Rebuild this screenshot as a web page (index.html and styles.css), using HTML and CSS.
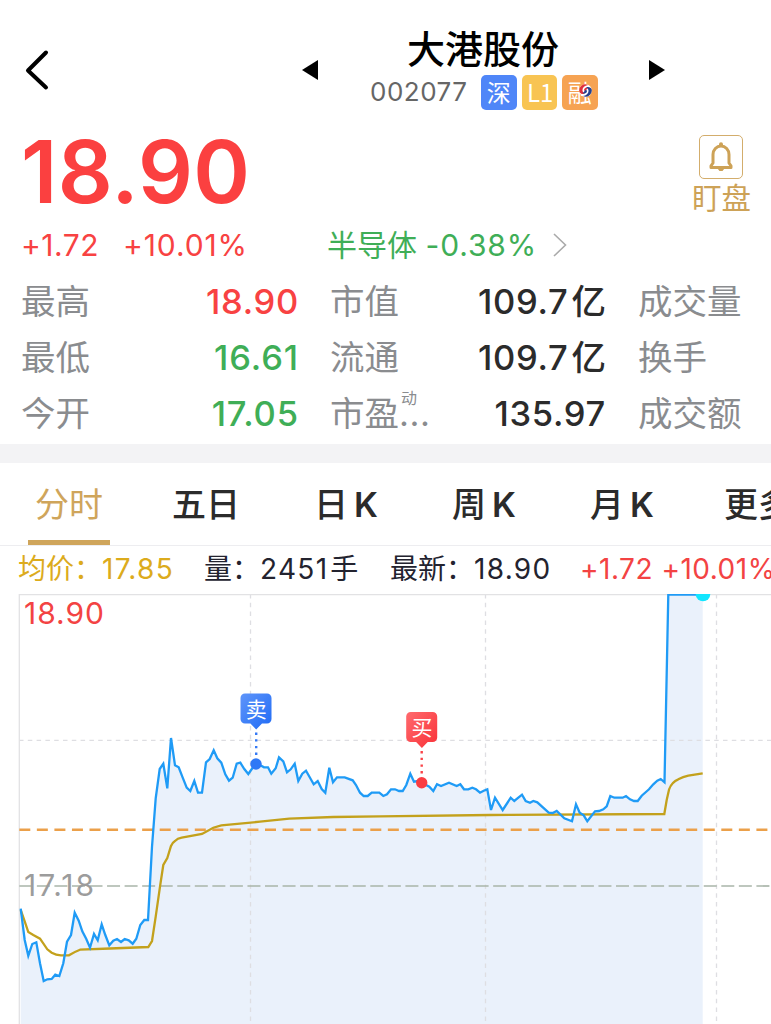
FILE: index.html
```html
<!DOCTYPE html>
<html lang="zh-CN">
<head>
  <meta charset="UTF-8" />
  <meta name="viewport" content="width=device-width, initial-scale=1.0" />
  <title>大港股份 002077</title>
  <link rel="stylesheet" href="styles.css">
</head>
<body>
  <header class="header">
    <svg class="back" width="24" height="42" viewBox="0 0 24 42"><path d="M21 3.500L3 21.500L21 38.500" /></svg>
    <svg class="arrow prev" width="16" height="20" viewBox="0 0 16 20"><path d="M0 10L16 0V20Z" /></svg>
    <div class="stock">
      <h1>大港股份</h1>
      <div class="code-row">
        <span class="code">002077</span>
        <span class="tag tag-blue">深</span>
        <span class="tag tag-yellow">L1</span>
        <span class="tag tag-orange">融
          <svg class="swirl" width="13" height="13" viewBox="0 0 13 13">
            <circle cx="6.500" cy="6.500" r="6.300" fill="#fff" />
            <path d="M0.300 7.500A6.200 6.200 0 0 1 9 0.900C5.500 1.500 3.200 3.500 3.500 6.500C3.600 8 4.600 9.300 6 9.800C3 10.600 0.800 9.500 0.300 7.500ZM5 6A2.600 2.600 0 0 1 9.500 4.300C7.500 4.300 7.600 6.800 5.800 7.200Z" fill="#e0303c" />
            <path d="M12.700 5.500A6.200 6.200 0 0 1 4 12.100C7.500 11.500 9.800 9.500 9.500 6.500C9.400 5 8.400 3.700 7 3.200C10 2.400 12.200 3.500 12.700 5.500ZM8 7A2.600 2.600 0 0 1 3.500 8.700C5.500 8.700 5.400 6.200 7.200 5.800Z" fill="#24408f" />
          </svg>
        </span>
      </div>
    </div>
    <svg class="arrow next" width="16" height="20" viewBox="0 0 16 20"><path d="M16 10L0 0V20Z" /></svg>
  </header>

  <section class="quote">
    <div class="price">18.90</div>
    <div class="watch">
      <div class="watch-box">
        <svg width="26" height="32" viewBox="0 0 26 32">
          <path class="bell" d="M3 26.500V24.800L5 22V13.500A8 8.500 0 0 1 21 13.500V22L23 24.800V26.500Z" />
          <path class="bell-fill" d="M11 5V3.200A2 2 0 0 1 15 3.200V5ZM9.500 27.500H16.500L14.500 30H11.500Z" />
        </svg>
      </div>
      <span>盯盘</span>
    </div>
  </section>

  <div class="change">
    <span class="diff red">+1.72</span>
    <span class="pct red">+10.01%</span>
    <span class="sector green">半导体 <b>-0.38%</b></span>
    <svg class="more" width="14" height="24" viewBox="0 0 14 24"><path d="M1 1L12.500 12L1 23" /></svg>
  </div>

  <div class="stats">
    <div class="stat"><span>最高</span><b class="red">18.90</b></div>
    <div class="stat"><span>市值</span><b>109.7<i>亿</i></b></div>
    <div class="stat"><span>成交量</span></div>
    <div class="stat"><span>最低</span><b class="green">16.61</b></div>
    <div class="stat"><span>流通</span><b>109.7<i>亿</i></b></div>
    <div class="stat"><span>换手</span></div>
    <div class="stat"><span>今开</span><b class="green">17.05</b></div>
    <div class="stat"><span class="pe">市盈<em>...</em><sup>动</sup></span><b>135.97</b></div>
    <div class="stat"><span>成交额</span></div>
  </div>

  <nav class="tabs">
    <a class="tab active">分时</a>
    <a class="tab">五日</a>
    <a class="tab tab-k">日<b>K</b></a>
    <a class="tab tab-k">周<b>K</b></a>
    <a class="tab tab-k">月<b>K</b></a>
    <a class="tab">更多</a>
  </nav>

  <div class="legend">
    <span class="avg">均价：<b>17.85</b></span>
    <span class="vol">量：<b>2451</b>手</span>
    <span class="last">最新：<b>18.90</b></span>
    <span class="red">+1.72 +10.01%</span>
  </div>

  <svg class="chart" width="771" height="430" viewBox="0 594 771 430">
    <path class="area" d="M20.700 1024V908.700L24.700 940L28.300 955.700L32.300 944L36.300 942.300L40 963.300L43.700 981L47.300 979.300L51.700 979L55.300 974.700L59.300 976L63.300 963.300L67 941.700L71 935L74.700 912.700L78.700 920.700L82.300 931.300L86.300 939L90 947.700L94 934L97.700 940.300L101.700 924.300L105.300 935L109.300 945.300L113.300 940.700L117 939L121 942L124.700 939L128.700 940.300L132.700 943.700L136.300 938.700L140.300 925L144.300 920H148L152 846.700L155.700 798.300L159.700 769L163.300 763.700L167.300 788.300L171 738L175 765.300L178.700 767.300L182.700 777.700L186.700 787.700L190.300 791L194.300 781L198 792.700H202L206 762.300L209.700 759L213.700 750.300L217.300 758.300L221.300 762.700L225.300 774.300L229 780.700L232.700 777.700L236.700 763.700L240.300 762.700L244.300 769L248.300 774L252.300 768.300L256 764L260 765L264 767.300H268L271.300 773.700L275.700 768.300L279 757.300L283.300 761.300L287 772.300L290.700 769.300L294.700 763.700L298.300 781L302.300 773.700L306 770.700L310 777.700L313.700 784.300L317.700 781L321.700 789L325.300 792.700L329.300 767.700L333 782.300L337 777.300H344.700L352.700 780.300L356 785L360 792.700L363.700 796H367.700L371.700 792.700H379.300L383.300 796L387 794.300L391 789.300H395L399 791H402.700L406.300 785L410.300 773.700L414 781.700L418 781L421.700 782.700L429.300 786.700L433.300 791L437 784.300L441 786L449 782.700L456.700 786L460.300 784.300L464 789.300H468.300L472.300 787.700L476 789.300L480 792.700L483.700 790.700L487.300 789.300L491 810L495 797.700L502.700 810L510.700 797.700L514.300 801L522 794.700L525.700 801L530 802.700L533.300 801L537.300 802.300L548.700 812.700L552.700 813L556.700 811L564.300 818.300L572 821.300L576 804.300L579.700 812.700L583.700 815.300L587.300 821.300L595 811.300L599 811L603.300 809.300L606.700 806.300L610.300 796L614.300 797.700H622.700L626 796L630 799.300L634 801H637.700L641.700 795.700L649 789.300L653.300 784.300L657.300 780.700L660.700 779L664.500 782.300L668.300 594.500H702.700V1024Z" />
    <g class="grid">
      <path d="M250.500 594V1024M485.500 594V1024M716.500 594V1024M19 740.300H771" />
    </g>
    <path class="frame" d="M19.300 1024V594.500H771" />
    <path class="line-orange" d="M19.300 829.700H771" />
    <path class="line-base" d="M19.300 886H771" />
    <path class="line-avg" d="M20.700 910L24.700 921.300L28.300 932L33.300 935L40 938.700L47.300 949.300L51.700 952.700Q56 955 61 955.300H69Q74 952 80 949.700L110 948.500L148.300 947L152 941L155.700 916.700L160 886.700L163.300 865L167.300 858L171 846Q172.500 842.500 175 841Q177.500 838.500 181.700 837.700L202 834L213.300 827.700L221.300 825.300L260 821.700L289.300 818.700L333.300 817L380 816.300L490 815L664.300 814L666.700 800L669 789.700Q670.500 785.500 672.700 783.300Q675 780.500 678.300 779.300Q683 776.800 688.300 775.700L702.700 773.300" />
    <path class="line-price" d="M20.700 908.700L24.700 940L28.300 955.700L32.300 944L36.300 942.300L40 963.300L43.700 981L47.300 979.300L51.700 979L55.300 974.700L59.300 976L63.300 963.300L67 941.700L71 935L74.700 912.700L78.700 920.700L82.300 931.300L86.300 939L90 947.700L94 934L97.700 940.300L101.700 924.300L105.300 935L109.300 945.300L113.300 940.700L117 939L121 942L124.700 939L128.700 940.300L132.700 943.700L136.300 938.700L140.300 925L144.300 920H148L152 846.700L155.700 798.300L159.700 769L163.300 763.700L167.300 788.300L171 738L175 765.300L178.700 767.300L182.700 777.700L186.700 787.700L190.300 791L194.300 781L198 792.700H202L206 762.300L209.700 759L213.700 750.300L217.300 758.300L221.300 762.700L225.300 774.300L229 780.700L232.700 777.700L236.700 763.700L240.300 762.700L244.300 769L248.300 774L252.300 768.300L256 764L260 765L264 767.300H268L271.300 773.700L275.700 768.300L279 757.300L283.300 761.300L287 772.300L290.700 769.300L294.700 763.700L298.300 781L302.300 773.700L306 770.700L310 777.700L313.700 784.300L317.700 781L321.700 789L325.300 792.700L329.300 767.700L333 782.300L337 777.300H344.700L352.700 780.300L356 785L360 792.700L363.700 796H367.700L371.700 792.700H379.300L383.300 796L387 794.300L391 789.300H395L399 791H402.700L406.300 785L410.300 773.700L414 781.700L418 781L421.700 782.700L429.300 786.700L433.300 791L437 784.300L441 786L449 782.700L456.700 786L460.300 784.300L464 789.300H468.300L472.300 787.700L476 789.300L480 792.700L483.700 790.700L487.300 789.300L491 810L495 797.700L502.700 810L510.700 797.700L514.300 801L522 794.700L525.700 801L530 802.700L533.300 801L537.300 802.300L548.700 812.700L552.700 813L556.700 811L564.300 818.300L572 821.300L576 804.300L579.700 812.700L583.700 815.300L587.300 821.300L595 811.300L599 811L603.300 809.300L606.700 806.300L610.300 796L614.300 797.700H622.700L626 796L630 799.300L634 801H637.700L641.700 795.700L649 789.300L653.300 784.300L657.300 780.700L660.700 779L664.500 782.300L668.300 594.500H702.700" />
    <circle cx="703" cy="594" r="7.300" fill="#12e6ff" />
    <text class="axis axis-top" x="24" y="623.500" textLength="80">18.90</text>
    <text class="axis axis-base" x="24" y="896" textLength="70">17.18</text>

    <!-- sell / buy markers -->
    <defs>
      <linearGradient id="sell" x1="0" y1="0" x2="1" y2="1"><stop offset="0" stop-color="#5f95fa" /><stop offset="1" stop-color="#1f6bf5" /></linearGradient>
      <linearGradient id="buy" x1="0" y1="0" x2="1" y2="1"><stop offset="0" stop-color="#ff6a6e" /><stop offset="1" stop-color="#f93238" /></linearGradient>
    </defs>
    <path class="dots" stroke="#3579f5" d="M256.200 732.500V758" />
    <path fill="url(#sell)" d="M245 693.500H267A4.500 4.500 0 0 1 271.500 698V719A4.500 4.500 0 0 1 267 723.500H262L256.200 729.500L250.400 723.500H245A4.500 4.500 0 0 1 240.500 719V698A4.500 4.500 0 0 1 245 693.500Z" />
    <text class="mark" x="256.200" y="716.500">卖</text>
    <circle cx="256" cy="764" r="5.700" fill="#2f78f6" />
    <path class="dots" stroke="#fa4348" d="M421.700 751V776" />
    <path fill="url(#buy)" d="M410.700 712H432.700A4.500 4.500 0 0 1 437.200 716.500V737.500A4.500 4.500 0 0 1 432.700 742H427.700L421.900 748L416.100 742H410.700A4.500 4.500 0 0 1 406.200 737.500V716.500A4.500 4.500 0 0 1 410.700 712Z" />
    <text class="mark" x="421.900" y="735">买</text>
    <circle cx="421.700" cy="782.700" r="5.700" fill="#fa3c41" />
  </svg>
</body>
</html>
```
FILE: styles.css
```css
* {
  box-sizing: border-box;
}
body {
  margin: 0;
  width: 771px;
  height: 1024px;
  overflow: hidden;
  background: #fff;
  color: #2b2b2b;
  font-family: Inter, "Noto Sans CJK SC", sans-serif;
}
b, i, em {
  font-weight: inherit;
  font-style: normal;
}
.red {
  color: #f84242;
}
.green {
  color: #3fae57;
}
.header {
  display: flex;
  height: 130px;
  padding-left: 25px;
}
.back {
  margin-top: 49px;
  fill: none;
  stroke: #000;
  stroke-width: 4;
  stroke-linecap: round;
  stroke-linejoin: round;
}
.arrow {
  margin-top: 60px;
}
.prev {
  margin-left: 253px;
}
.next {
  margin-left: 51px;
}
.stock {
  width: 228px;
  margin-left: 52px;
  padding-top: 27px;
}
.stock h1 {
  margin: 0;
  padding-left: 37px;
  color: #000;
  font-size: 38px;
  font-weight: 500;
  line-height: 44px;
}
.code-row {
  display: flex;
  align-items: center;
  gap: 5px;
  margin-top: 4px;
}
.code {
  width: 106px;
  margin-top: -2px;
  color: #666;
  font-size: 26px;
  letter-spacing: 0.500px;
}
.tag {
  position: relative;
  width: 35.500px;
  height: 35px;
  border-radius: 5px;
  color: #fff;
  font-family: "Noto Sans CJK SC", sans-serif;
  font-size: 24px;
  line-height: 34px;
  text-align: center;
}
.tag-blue {
  background: #4f86f8;
}
.tag-yellow {
  padding-left: 2px;
  background: #f8c453;
}
.tag-orange {
  background: #f6a353;
}
.swirl {
  position: absolute;
  left: 17px;
  top: 9px;
}
.quote {
  display: flex;
  justify-content: space-between;
  height: 90px;
  padding: 0 20px 0 21px;
}
.price {
  color: #fb4040;
  font-size: 86px;
  font-weight: 600;
  line-height: 84px;
  letter-spacing: 0.300px;
}
.watch {
  display: flex;
  flex-direction: column;
  align-items: center;
  padding-top: 5px;
  color: #cda257;
  font-size: 29.500px;
  line-height: 38px;
}
.watch-box {
  display: flex;
  align-items: center;
  justify-content: center;
  width: 44px;
  height: 44px;
  border: 1px solid #d3ad6c;
  border-radius: 5px;
}
.bell {
  fill: none;
  stroke: #cda257;
  stroke-width: 3;
  stroke-linejoin: round;
}
.bell-fill {
  fill: #cda257;
}
.change {
  display: flex;
  align-items: center;
  height: 50px;
  padding-left: 21px;
  font-size: 30px;
  line-height: 50px;
}
.diff {
  width: 102px;
  letter-spacing: 0.500px;
}
.pct {
  width: 204px;
  letter-spacing: 0.900px;
}
.sector {
  width: 226px;
  white-space: nowrap;
}
.sector b {
  letter-spacing: 0.900px;
}
.more {
  fill: none;
  stroke: #aaa;
  stroke-width: 1.600;
}
.stats {
  display: grid;
  grid-template-columns: 278px 276px 120px;
  grid-auto-rows: 56px;
  column-gap: 31px;
  height: 174px;
  padding: 4px 0 0 21px;
}
.stat {
  display: flex;
  align-items: baseline;
  justify-content: space-between;
  font-size: 34.500px;
  line-height: 56px;
  white-space: nowrap;
}
.stat:nth-child(3n) {
  padding-left: 1px;
}
.stat span {
  color: #8a8c8f;
}
.stat b {
  font-weight: 500;
  letter-spacing: 0.700px;
}
.stat b.green {
  letter-spacing: 0.900px;
}
.stat i {
  margin-left: 3px;
  letter-spacing: 0;
}
.pe {
  position: relative;
}
.pe em {
  letter-spacing: 0.600px;
}
.pe sup {
  position: absolute;
  left: 71px;
  top: 2px;
  font-size: 16px;
  line-height: 20px;
}
.tabs {
  display: flex;
  height: 102px;
  border-top: 19px solid #f3f3f5;
  border-bottom: 1px solid #ededf0;
  overflow: hidden;
}
.tab {
  flex: none;
  width: 138px;
  font-size: 34px;
  font-weight: 500;
  line-height: 83px;
  text-align: center;
}
.tab-k {
  padding-left: 4px;
}
.tab b {
  margin-left: 6px;
  font-weight: 600;
}
.tab.active {
  width: 82px;
  height: 82px;
  margin: 0 27px 0 28px;
  border-bottom: 5px solid #cfa55b;
  color: #cfa55b;
  font-weight: 400;
}
.legend {
  display: flex;
  height: 48px;
  padding-left: 18px;
  color: #23232f;
  font-size: 28px;
  line-height: 46px;
  white-space: nowrap;
}
.legend span {
  flex: none;
}
.legend b {
  letter-spacing: 1.300px;
}
.avg {
  width: 186px;
  color: #dcab1c;
}
.vol {
  width: 186px;
}
.vol b {
  margin-right: 2px;
}
.last {
  width: 190px;
}
.legend .red {
  color: #f34343;
  letter-spacing: 0.500px;
}
.chart {
  display: block;
}
.area {
  fill: #eaf1fb;
}
.frame {
  fill: none;
  stroke: #e2e2e4;
  stroke-width: 1.300;
}
.grid {
  fill: none;
  stroke: #dedee2;
  stroke-width: 1.300;
  stroke-dasharray: 4.500 4.300;
}
.line-orange {
  stroke: #eba04a;
  stroke-width: 2.500;
  stroke-dasharray: 11 6.550;
}
.line-base {
  stroke: #a9b5a9;
  stroke-width: 1.700;
  stroke-dasharray: 13 4.550;
}
.line-avg {
  fill: none;
  stroke: #c3a11c;
  stroke-width: 2.300;
}
.line-price {
  fill: none;
  stroke: #1f9bf6;
  stroke-width: 2.300;
}
.axis {
  font-size: 30px;
}
.axis-top {
  fill: #f34343;
}
.axis-base {
  fill: #9c9c9c;
}
.dots {
  stroke-width: 2.400;
  stroke-dasharray: 2.400 4.300;
}
.mark {
  fill: #fff;
  font-size: 21px;
  text-anchor: middle;
}
```
